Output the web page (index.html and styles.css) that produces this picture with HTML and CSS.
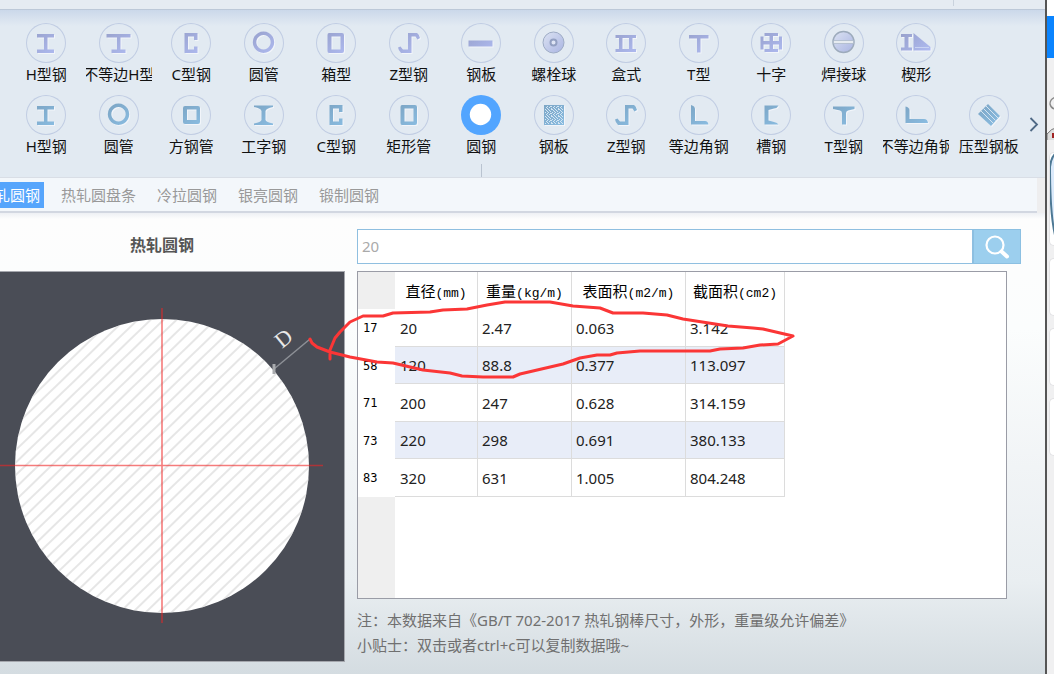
FILE: index.html
```html
<!DOCTYPE html>
<html lang="zh-CN">
<head>
<meta charset="utf-8">
<title>热轧圆钢</title>
<link rel="stylesheet" href="styles.css">
</head>
<body>
<svg class="defs" aria-hidden="true">
  <defs>
    <linearGradient id="violet" gradientUnits="userSpaceOnUse" x1="8" y1="8" x2="28" y2="32"><stop offset="0" stop-color="#98a1cc"/><stop offset="1" stop-color="#aebaf0"/></linearGradient>
    <linearGradient id="blue" gradientUnits="userSpaceOnUse" x1="8" y1="8" x2="28" y2="32"><stop offset="0" stop-color="#7ba3c2"/><stop offset="1" stop-color="#8abde2"/></linearGradient>
    <linearGradient id="ball" x1="0" y1="0" x2="1" y2="1"><stop offset="0" stop-color="#dce3f2"/><stop offset="1" stop-color="#a9b4e2"/></linearGradient>
    <pattern id="hatch" width="9" height="9" patternUnits="userSpaceOnUse" patternTransform="rotate(46)"><path d="M4 0V9" stroke="#cdcdcd" stroke-width="1"/></pattern>
    <pattern id="speckle" width="7" height="7" patternUnits="userSpaceOnUse"><path d="M0 .5h1M3 .5h2M1 1.500h1M5 1.500h1M2 2.500h1M6 2.500h1M0 3.500h1M4 3.500h1M2 4.500h2M6 4.500h1M1 5.500h1M5 5.500h1M3 6.500h1M6 6.500h1" stroke="#d4e6f3" stroke-width="1"/></pattern>
    <symbol id="i-h" viewBox="0 0 40 40"><path d="M11 11H28V14.500H21.500V26.500H28V30H11V26.500H18V14.500H11Z"/></symbol>
    <symbol id="i-uh" viewBox="0 0 40 40"><path d="M7.500 11H31.500V14.500H21.500V26.500H26.500V30H12.500V26.500H18V14.500H7.500Z"/></symbol>
    <symbol id="i-c" viewBox="0 0 40 40"><path d="M13.500 10H26.500V17H23V13.500H17V26.500H23V23.500H26.500V30H13.500Z"/></symbol>
    <symbol id="i-ring" viewBox="0 0 40 40"><path fill-rule="evenodd" d="M19.500 8.500a10.700 10.700 0 1 0 .01 0ZM19.500 12a7.200 7.200 0 1 1-.01 0Z"/></symbol>
    <symbol id="i-rect" viewBox="0 0 40 40"><path fill-rule="evenodd" d="M13 10H26Q28 10 28 12V28Q28 30 26 30H13Q11.500 30 11.500 28V12Q11.500 10 13 10ZM15.500 13.500V26.500H24.500V13.500Z"/></symbol>
    <symbol id="i-square" viewBox="0 0 40 40"><path fill-rule="evenodd" d="M14 11H27Q29 11 29 13V27Q29 29 27 29H14Q12 29 12 27V13Q12 11 14 11ZM16 14.500V25H25.500V14.500Z"/></symbol>
    <symbol id="i-z" viewBox="0 0 40 40"><path d="M19 10H28Q30 11 31 15L28.500 16.500 26.500 13.500H22.500V30H12Q9.500 27.500 9 24.500L11.500 23.500 14 26.500H19Z"/></symbol>
    <symbol id="i-bar" viewBox="0 0 40 40"><path d="M7.500 17.500H31.500V23.500H7.500Z"/></symbol>
    <symbol id="i-box" viewBox="0 0 40 40"><path fill-rule="evenodd" d="M9.500 12H30V15H26.500V26H30V29H9.500V26H13V15H9.500ZM16.500 15V26H23V15Z"/></symbol>
    <symbol id="i-t" viewBox="0 0 40 40"><path d="M10 12H29.500V15.500H21.500V29.500H18V15.500H10Z"/></symbol>
    <symbol id="i-cross" viewBox="0 0 40 40"><path d="M13.500 10H27V13H22V18H28V13.500H31V26.500H28V21.500H22V26H27V29H13.500V26H18.500V21.500H12.500V26.500H9.500V13.500H12.500V18H18.500V13H13.500Z"/></symbol>
    <symbol id="i-wedge" viewBox="0 0 40 40"><path d="M5 11H16V14H12.500V24.500H16V27.500H5V24.500H8.500V14H5ZM17.500 10 34.500 24V27.500H17.500Z"/><path d="M19 24.500H33" stroke="#c9d3f2"/></symbol>
    <symbol id="i-i" viewBox="0 0 40 40"><path d="M10 10.500H29V12Q22 13.500 21.500 16V25Q22 27 29 28.500V30H10V28.500Q17 27 17.500 25V16Q17 13.500 10 12Z"/></symbol>
    <symbol id="i-l" viewBox="0 0 40 40"><path d="M12 10Q16 11 16 14V26H26Q29 26 29.500 29.500H12Z"/></symbol>
    <symbol id="i-ul" viewBox="0 0 40 40"><path d="M9.500 11.500Q13.500 12.500 13.500 15V24H28Q31.500 24 32 28H9.500Z"/></symbol>
    <symbol id="i-channel" viewBox="0 0 40 40"><path d="M13.500 10.500H27.500Q26.500 13 23 13.500L17.500 15V25.500L23 27Q26.500 27.500 27.500 29.500H13.500Z"/></symbol>
    <symbol id="i-tt" viewBox="0 0 40 40"><path d="M9 11.500H30.500V14L24 15.500Q22 16 22 18V29.500H18V18Q18 16 16 15.500L9 14Z"/></symbol>
    <symbol id="i-deck" viewBox="0 0 40 40"><path d="M19 9 31 21 22 31 9 19Z"/><path d="M17 11 29 23M14.500 13.500 26.500 25.500M12 16 24 28" stroke="#d6e5f1"/></symbol>
  </defs>
</svg>

<div class="app">
  <header class="titlebar"></header>
  <nav class="toolbar" aria-label="型材">
    <div class="profiles violet">
      <button class="profile"><svg class="icon"><use href="#i-h"/></svg><span class="name">H型钢</span></button>
      <button class="profile"><svg class="icon"><use href="#i-uh"/></svg><span class="name">不等边H型</span></button>
      <button class="profile"><svg class="icon"><use href="#i-c"/></svg><span class="name">C型钢</span></button>
      <button class="profile"><svg class="icon"><use href="#i-ring"/></svg><span class="name">圆管</span></button>
      <button class="profile"><svg class="icon"><use href="#i-rect"/></svg><span class="name">箱型</span></button>
      <button class="profile"><svg class="icon"><use href="#i-z"/></svg><span class="name">Z型钢</span></button>
      <button class="profile"><svg class="icon"><use href="#i-bar"/></svg><span class="name">钢板</span></button>
      <button class="profile"><svg class="icon" viewBox="0 0 40 40"><circle cx="19.500" cy="19.500" r="10.500" fill="url(#ball)" stroke="#9dabc4"/><circle cx="19.500" cy="19.500" r="3" fill="#dfe5f5" stroke="#93a0c2" stroke-width="2"/></svg><span class="name">螺栓球</span></button>
      <button class="profile"><svg class="icon"><use href="#i-box"/></svg><span class="name">盒式</span></button>
      <button class="profile"><svg class="icon"><use href="#i-t"/></svg><span class="name">T型</span></button>
      <button class="profile"><svg class="icon"><use href="#i-cross"/></svg><span class="name">十字</span></button>
      <button class="profile"><svg class="icon" viewBox="0 0 40 40"><circle cx="19.500" cy="19" r="10.500" fill="url(#ball)" stroke="#9dabbc" stroke-width="1.500"/><rect x="9.500" y="17.500" width="20" height="3" fill="#e6ebf0" stroke="#a9b5c6" stroke-width=".7"/></svg><span class="name">焊接球</span></button>
      <button class="profile"><svg class="icon"><use href="#i-wedge"/></svg><span class="name">楔形</span></button>
    </div>
    <div class="profiles blue">
      <button class="profile"><svg class="icon"><use href="#i-h"/></svg><span class="name">H型钢</span></button>
      <button class="profile"><svg class="icon"><use href="#i-ring"/></svg><span class="name">圆管</span></button>
      <button class="profile"><svg class="icon"><use href="#i-square"/></svg><span class="name">方钢管</span></button>
      <button class="profile"><svg class="icon"><use href="#i-i"/></svg><span class="name">工字钢</span></button>
      <button class="profile"><svg class="icon"><use href="#i-c"/></svg><span class="name">C型钢</span></button>
      <button class="profile"><svg class="icon"><use href="#i-rect"/></svg><span class="name">矩形管</span></button>
      <button class="profile selected" aria-pressed="true"><svg class="icon" viewBox="0 0 40 40"><circle cx="19.500" cy="19.500" r="10.700" fill="#fff"/></svg><span class="name">圆钢</span></button>
      <button class="profile"><svg class="icon" viewBox="0 0 40 40"><path d="M10 10H30V30H10Z"/><rect x="11" y="11" width="18" height="18" fill="url(#speckle)"/></svg><span class="name">钢板</span></button>
      <button class="profile"><svg class="icon"><use href="#i-z"/></svg><span class="name">Z型钢</span></button>
      <button class="profile"><svg class="icon"><use href="#i-l"/></svg><span class="name">等边角钢</span></button>
      <button class="profile"><svg class="icon"><use href="#i-channel"/></svg><span class="name">槽钢</span></button>
      <button class="profile"><svg class="icon"><use href="#i-tt"/></svg><span class="name">T型钢</span></button>
      <button class="profile"><svg class="icon"><use href="#i-ul"/></svg><span class="name">不等边角钢</span></button>
      <button class="profile"><svg class="icon"><use href="#i-deck"/></svg><span class="name">压型钢板</span></button>
    </div>
    <button class="next" aria-label="下一页"><svg width="10" height="16" viewBox="0 0 10 16"><path d="M1.500 2 8 8.500 1.500 15" fill="none" stroke="#4f6985" stroke-width="1.800"/></svg></button>
  </nav>

  <div class="tabrow">
    <nav class="tabs" aria-label="圆钢类型">
      <button class="tab active">热轧圆钢</button>
      <button class="tab">热轧圆盘条</button>
      <button class="tab">冷拉圆钢</button>
      <button class="tab">银亮圆钢</button>
      <button class="tab">锻制圆钢</button>
    </nav>
  </div>

  <main class="content">
    <section class="figure">
      <h1 class="title">热轧圆钢</h1>
      <div class="canvas">
        <svg class="drawing" viewBox="0 0 344 389">
          <circle cx="162" cy="194" r="147" fill="#fff"/>
          <circle cx="162" cy="194" r="147" fill="url(#hatch)"/>
          <path d="M0 193.500H323M162 36V351" stroke="#ee2424" stroke-opacity=".6" stroke-width="1.600"/>
          <path d="M274 97 310 67" stroke="#8d9096" stroke-width="1.500"/>
          <path d="M274 92V102" stroke="#a9abae" stroke-width="3"/>
          <text class="dim" transform="translate(282 77) rotate(-39)">D</text>
        </svg>
      </div>
    </section>

    <section class="data">
      <form class="search">
        <input class="query" type="text" placeholder="20" aria-label="搜索">
        <button class="go" type="button" aria-label="搜索"><svg width="26" height="26" viewBox="0 0 26 26"><circle cx="11" cy="11" r="8.500" fill="none" stroke="#fff" stroke-width="2.200"/><path d="M17.500 17.500 23 22.500" stroke="#fff" stroke-width="4" stroke-linecap="round"/></svg></button>
      </form>
      <div class="tablebox">
        <table class="specs">
          <thead>
            <tr><td class="corner"></td><th scope="col">直径<span class="unit">(mm)</span></th><th scope="col">重量<span class="unit">(kg/m)</span></th><th scope="col">表面积<span class="unit">(m2/m)</span></th><th scope="col">截面积<span class="unit">(cm2)</span></th></tr>
          </thead>
          <tbody>
            <tr><th scope="row">17</th><td>20</td><td>2.47</td><td>0.063</td><td>3.142</td></tr>
            <tr><th scope="row">58</th><td>120</td><td>88.8</td><td>0.377</td><td>113.097</td></tr>
            <tr><th scope="row">71</th><td>200</td><td>247</td><td>0.628</td><td>314.159</td></tr>
            <tr><th scope="row">73</th><td>220</td><td>298</td><td>0.691</td><td>380.133</td></tr>
            <tr><th scope="row">83</th><td>320</td><td>631</td><td>1.005</td><td>804.248</td></tr>
          </tbody>
        </table>
      </div>
      <p class="notes">注：本数据来自《GB/T 702-2017 热轧钢棒尺寸，外形，重量级允许偏差》<br>小贴士：双击或者ctrl+c可以复制数据哦~</p>
    </section>
  </main>

  <svg class="mark" width="1040" height="660" viewBox="0 0 1040 660" aria-hidden="true"><path d="M310 339 312 343 317 347 330 352 350 357 377 362 393 363 423 370 450 373 462 376 483 377H513L520 374 563 364 580 358 597 355H610L617 353 640 351H710L720 349 743 348 760 345 778 344 793 336 763 329 753 328 728 326 683 319 667 315 643 313H613L600 308 573 306 550 302H505L487 305 467 309 443 310 430 312 393 313 383 316H363L350 322 340 332 335 338 330 350V359"/></svg>
</div>

<aside class="side">
  <div class="side-head"></div>
  <div class="side-bar"></div>
  <div class="side-body">
    <svg class="side-art" width="7" height="82" viewBox="0 0 7 82"><path d="M9 39Q3 41 3 46Q4 51 9 51" fill="none" stroke="#888" stroke-width="1.300"/><path d="M0 76Q5 70 9 70V92H0Z" fill="#ddd" stroke="#777"/><path d="M5 75H8V80H5Z" fill="#a02222"/></svg>
    <div class="side-card first"><svg width="5" height="88" viewBox="0 0 5 88"><path d="M6 0Q1 4 0 14Q0 65 6 86Z" fill="#dbeafb" stroke="#4d7894" stroke-width="2"/></svg></div>
    <div class="side-card"></div>
    <div class="side-card"></div>
    <div class="side-card"></div>
  </div>
</aside>
</body>
</html>
```
FILE: styles.css
```css
* {
  box-sizing: border-box;
}

body {
  margin: 0;
  min-height: 100vh;
  display: flex;
  overflow: hidden;
  font: 15px/22px "Noto Sans", "Noto Sans CJK SC", sans-serif;
  color: #222;
}

button,
input {
  font: inherit;
  border: 0;
  padding: 0;
  background: none;
}

.defs {
  position: absolute;
  width: 0;
  height: 0;
}

.app {
  position: relative;
  flex: 1;
  min-width: 0;
  display: flex;
  flex-direction: column;
  overflow: hidden;
  background: #f0f0f0;
}

.titlebar {
  height: 10px;
  background: linear-gradient(to right, transparent 953px, #c9d2dd 953px, #c9d2dd 954px, transparent 954px) 0 0 / 100% 6px no-repeat, #e5ebf2;
  border-bottom: 1px solid #bcc8d8;
}

.toolbar {
  display: grid;
  grid-template-columns: 1fr 20px;
  row-gap: 10px;
  padding: 13px 0 20px 10px;
  background: linear-gradient(#cbd8ea, #e2eaf2 16px);
  border-bottom: 1px solid #d9dee6;
}

.profiles {
  grid-column: 1;
  display: grid;
  grid-template-columns: repeat(14, 1fr);
  justify-items: center;
}

.profile {
  position: relative;
  display: flex;
  flex-direction: column;
  align-items: center;
  width: 66px;
  color: #111;
}

.icon {
  width: 40px;
  height: 40px;
  border-radius: 50%;
  box-shadow: inset 0 0 0 1px #c1cde3;
}

.icon path,
.icon use {
  filter: drop-shadow(1px 1px 0 #f2f5fa);
}

.violet .icon {
  fill: url(#violet);
}

.blue .icon {
  fill: url(#blue);
}

.selected .icon {
  background: #52a5ff;
  box-shadow: none;
}

.selected::after {
  content: "";
  position: absolute;
  top: 69px;
  left: 50%;
  width: 1px;
  height: 13px;
  background: #b9c3d0;
}

.name {
  display: flex;
  justify-content: center;
  width: 66px;
  overflow: hidden;
  white-space: nowrap;
}

.next {
  grid-column: 2;
  grid-row: 2;
  align-self: start;
  height: 58px;
  display: flex;
  align-items: center;
  justify-content: flex-start;
  padding-left: 4px;
}

.tabrow {
  padding-right: 8px;
  background: #eeeeef;
}

.tabs {
  display: flex;
  gap: 13px;
  height: 35px;
  padding: 4px 0;
  background: #f3f7fb;
  border-bottom: 2px solid #d2d7e1;
}

.tab {
  flex: none;
  height: 26px;
  padding: 0 4px;
  color: #999;
}

.tab.active {
  margin-left: -24px;
  background: #56a5fc;
  color: #fff;
}

.content {
  flex: 1;
  display: grid;
  grid-template-columns: 345px 1fr;
  column-gap: 12px;
  padding: 16px 24px 12px 0;
  background: linear-gradient(#eef0f4, #fdfdfd 6px, #fbfdfd 25%, #f1f4f6 55%, #e9eef1 80%, #d4dce1);
}

.figure,
.data {
  display: flex;
  flex-direction: column;
  min-width: 0;
}

.title {
  margin: 0;
  height: 42px;
  padding-right: 21px;
  font-size: 16px;
  line-height: 32px;
  font-weight: bold;
  text-align: center;
  color: #555;
}

.canvas {
  flex: 1;
  display: flex;
  background: #4a4d56;
  border: 1px solid #a5a7ad;
  border-left: 0;
}

.drawing {
  width: 100%;
}

.dim {
  font: 22px "Liberation Serif", serif;
  fill: #e8e8e8;
}

.search {
  display: flex;
  height: 35px;
  margin-bottom: 7px;
}

.query {
  flex: 1;
  min-width: 0;
  padding: 0 4px 1px;
  border: 1px solid #8fbfe0;
  background: #fff;
}

.query::placeholder {
  color: #aaa;
  opacity: 1;
}

.go {
  width: 48px;
  display: flex;
  align-items: center;
  justify-content: center;
  background: #9ccfee;
  border: 1px solid #8cc0e2;
}

.tablebox {
  flex: 1;
  margin-right: 14px;
  border: 1px solid #9a9ca6;
  background: linear-gradient(to right, #efefef 37px, #fff 37px);
}

.specs {
  border-collapse: separate;
  border-spacing: 0;
  table-layout: fixed;
  width: 427px;
}

.specs tr {
  height: 38px;
}

.specs thead tr {
  height: 37px;
}

.specs tbody tr:nth-child(even) {
  height: 37px;
  background: #e8edf8;
}

.specs th,
.specs td {
  padding: 0 0 0 4px;
  border-right: 1px solid #dcdcdc;
  border-bottom: 1px solid #dcdcdc;
  text-align: left;
}

.specs thead th {
  width: 114px;
  padding: 0;
  border-bottom: 0;
  background: #fff;
  font-weight: normal;
  text-align: center;
  white-space: nowrap;
  color: #000;
}

.specs thead .corner {
  width: 37px;
  border: 0;
}

.specs thead th:nth-child(2) {
  width: 83px;
}

.specs thead th:nth-child(3) {
  width: 94px;
}

.specs thead th:nth-child(5) {
  width: 99px;
}

.specs tbody th {
  padding-left: 5px;
  border: 0;
  background: #fff;
  font: 12px "DejaVu Sans Mono", monospace;
  color: #000;
}

.specs tbody td:nth-child(2) {
  padding-left: 5px;
}

.unit {
  font: 13px "Liberation Mono", monospace;
}

.notes {
  margin: 9px 0 4px;
  line-height: 25px;
  color: #707070;
}

.mark {
  position: absolute;
  top: 0;
  left: 0;
  fill: none;
  stroke: #fb3636;
  stroke-width: 3;
  stroke-linejoin: round;
  stroke-linecap: round;
  pointer-events: none;
}

.side {
  flex: none;
  width: 9px;
  display: flex;
  flex-direction: column;
  overflow: hidden;
  background: #f0f0f1;
  border-left: 2px solid #555;
}

.side-head {
  height: 16px;
  background: #fff;
}

.side-bar {
  height: 42px;
  background: #0a84ff;
}

.side-body {
  display: flex;
  flex-direction: column;
  gap: 12px;
}

.side-card {
  height: 58px;
  margin-left: 2px;
  background: #fff;
  border: 1px solid #e2e2e4;
  border-right: 0;
  border-radius: 5px 0 0 5px;
}

.side-card.first {
  height: 94px;
  overflow: hidden;
}
```
